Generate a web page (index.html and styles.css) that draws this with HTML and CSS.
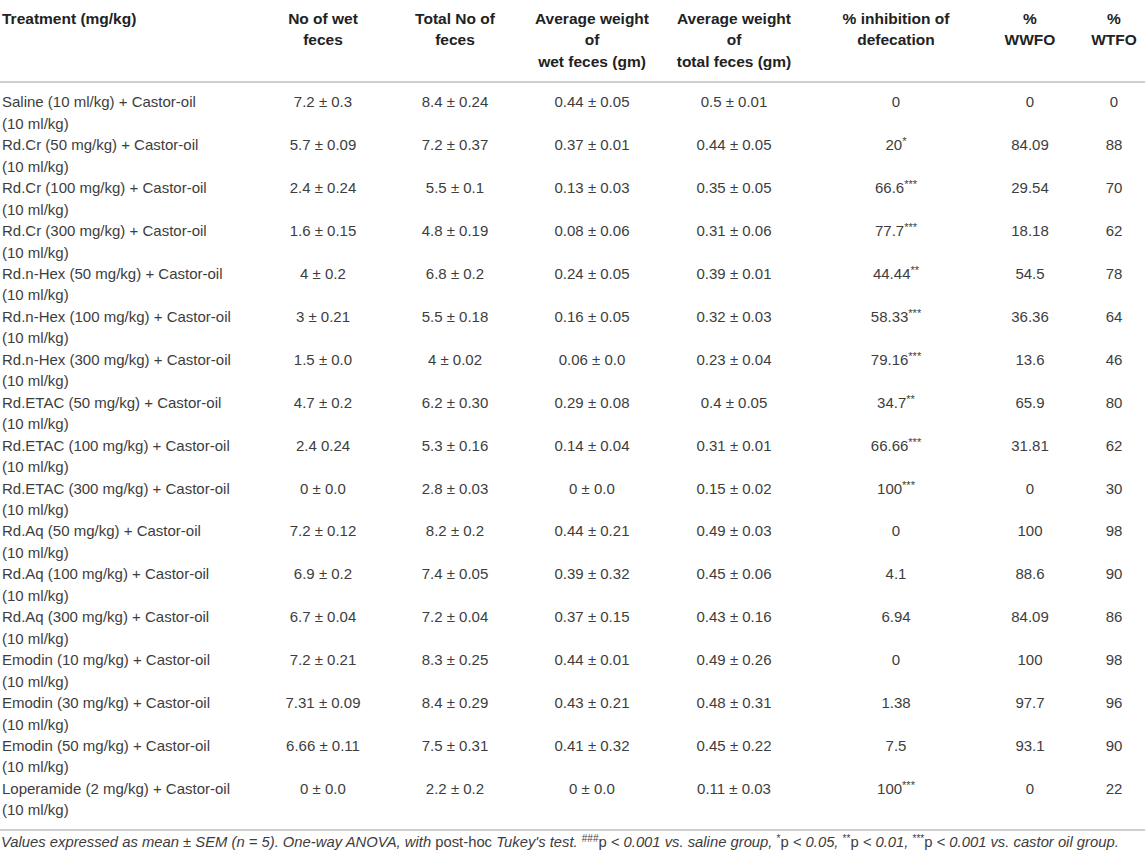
FILE: index.html
```html
<!DOCTYPE html>
<html>
<head>
<meta charset="utf-8">
<link rel="stylesheet" href="styles.css">
</head>
<body>
<table class="tbl">
<colgroup>
<col class="c1"><col class="c2"><col class="c3"><col class="c4"><col class="c5"><col class="c6"><col class="c7"><col class="c8">
</colgroup>
<thead>
<tr>
<th class="left">Treatment (mg/kg)</th>
<th>No of wet<br>feces</th>
<th>Total No of<br>feces</th>
<th>Average weight<br>of<br>wet feces (gm)</th>
<th>Average weight<br>of<br>total feces (gm)</th>
<th>% inhibition of<br>defecation</th>
<th>%<br>WWFO</th>
<th>%<br>WTFO</th>
</tr>
</thead>
<tbody>
<tr><td class="left">Saline (10 ml/kg) + Castor-oil<br>(10 ml/kg)</td><td>7.2 ± 0.3</td><td>8.4 ± 0.24</td><td>0.44 ± 0.05</td><td>0.5 ± 0.01</td><td>0</td><td>0</td><td>0</td></tr>
<tr><td class="left">Rd.Cr (50 mg/kg) + Castor-oil<br>(10 ml/kg)</td><td>5.7 ± 0.09</td><td>7.2 ± 0.37</td><td>0.37 ± 0.01</td><td>0.44 ± 0.05</td><td>20<sup>*</sup></td><td>84.09</td><td>88</td></tr>
<tr><td class="left">Rd.Cr (100 mg/kg) + Castor-oil<br>(10 ml/kg)</td><td>2.4 ± 0.24</td><td>5.5 ± 0.1</td><td>0.13 ± 0.03</td><td>0.35 ± 0.05</td><td>66.6<sup>***</sup></td><td>29.54</td><td>70</td></tr>
<tr><td class="left">Rd.Cr (300 mg/kg) + Castor-oil<br>(10 ml/kg)</td><td>1.6 ± 0.15</td><td>4.8 ± 0.19</td><td>0.08 ± 0.06</td><td>0.31 ± 0.06</td><td>77.7<sup>***</sup></td><td>18.18</td><td>62</td></tr>
<tr><td class="left">Rd.n-Hex (50 mg/kg) + Castor-oil<br>(10 ml/kg)</td><td>4 ± 0.2</td><td>6.8 ± 0.2</td><td>0.24 ± 0.05</td><td>0.39 ± 0.01</td><td>44.44<sup>**</sup></td><td>54.5</td><td>78</td></tr>
<tr><td class="left">Rd.n-Hex (100 mg/kg) + Castor-oil<br>(10 ml/kg)</td><td>3 ± 0.21</td><td>5.5 ± 0.18</td><td>0.16 ± 0.05</td><td>0.32 ± 0.03</td><td>58.33<sup>***</sup></td><td>36.36</td><td>64</td></tr>
<tr><td class="left">Rd.n-Hex (300 mg/kg) + Castor-oil<br>(10 ml/kg)</td><td>1.5 ± 0.0</td><td>4 ± 0.02</td><td>0.06 ± 0.0</td><td>0.23 ± 0.04</td><td>79.16<sup>***</sup></td><td>13.6</td><td>46</td></tr>
<tr><td class="left">Rd.ETAC (50 mg/kg) + Castor-oil<br>(10 ml/kg)</td><td>4.7 ± 0.2</td><td>6.2 ± 0.30</td><td>0.29 ± 0.08</td><td>0.4 ± 0.05</td><td>34.7<sup>**</sup></td><td>65.9</td><td>80</td></tr>
<tr><td class="left">Rd.ETAC (100 mg/kg) + Castor-oil<br>(10 ml/kg)</td><td>2.4 0.24</td><td>5.3 ± 0.16</td><td>0.14 ± 0.04</td><td>0.31 ± 0.01</td><td>66.66<sup>***</sup></td><td>31.81</td><td>62</td></tr>
<tr><td class="left">Rd.ETAC (300 mg/kg) + Castor-oil<br>(10 ml/kg)</td><td>0 ± 0.0</td><td>2.8 ± 0.03</td><td>0 ± 0.0</td><td>0.15 ± 0.02</td><td>100<sup>***</sup></td><td>0</td><td>30</td></tr>
<tr><td class="left">Rd.Aq (50 mg/kg) + Castor-oil<br>(10 ml/kg)</td><td>7.2 ± 0.12</td><td>8.2 ± 0.2</td><td>0.44 ± 0.21</td><td>0.49 ± 0.03</td><td>0</td><td>100</td><td>98</td></tr>
<tr><td class="left">Rd.Aq (100 mg/kg) + Castor-oil<br>(10 ml/kg)</td><td>6.9 ± 0.2</td><td>7.4 ± 0.05</td><td>0.39 ± 0.32</td><td>0.45 ± 0.06</td><td>4.1</td><td>88.6</td><td>90</td></tr>
<tr><td class="left">Rd.Aq (300 mg/kg) + Castor-oil<br>(10 ml/kg)</td><td>6.7 ± 0.04</td><td>7.2 ± 0.04</td><td>0.37 ± 0.15</td><td>0.43 ± 0.16</td><td>6.94</td><td>84.09</td><td>86</td></tr>
<tr><td class="left">Emodin (10 mg/kg) + Castor-oil<br>(10 ml/kg)</td><td>7.2 ± 0.21</td><td>8.3 ± 0.25</td><td>0.44 ± 0.01</td><td>0.49 ± 0.26</td><td>0</td><td>100</td><td>98</td></tr>
<tr><td class="left">Emodin (30 mg/kg) + Castor-oil<br>(10 ml/kg)</td><td>7.31 ± 0.09</td><td>8.4 ± 0.29</td><td>0.43 ± 0.21</td><td>0.48 ± 0.31</td><td>1.38</td><td>97.7</td><td>96</td></tr>
<tr><td class="left">Emodin (50 mg/kg) + Castor-oil<br>(10 ml/kg)</td><td>6.66 ± 0.11</td><td>7.5 ± 0.31</td><td>0.41 ± 0.32</td><td>0.45 ± 0.22</td><td>7.5</td><td>93.1</td><td>90</td></tr>
<tr><td class="left">Loperamide (2 mg/kg) + Castor-oil<br>(10 ml/kg)</td><td>0 ± 0.0</td><td>2.2 ± 0.2</td><td>0 ± 0.0</td><td>0.11 ± 0.03</td><td>100<sup>***</sup></td><td>0</td><td>22</td></tr>
</tbody>
</table>
<p class="note"><i>Values expressed as mean ± SEM (n = 5). One-way ANOVA, with</i> post-hoc <i>Tukey's test.</i> <sup>###</sup>p <i>&lt; 0.001 vs. saline group,</i> <sup>*</sup>p <i>&lt; 0.05,</i> <sup>**</sup>p <i>&lt; 0.01,</i> <sup>***</sup>p <i>&lt; 0.001 vs. castor oil group.</i></p>
</body>
</html>
```
FILE: styles.css
```css
html, body {
  margin: 0;
  padding: 0;
  background: #fff;
}
body {
  font-family: "Liberation Sans", Arial, sans-serif;
  font-size: 15px;
  color: #3d3d3d;
  width: 1145px;
}
.tbl {
  width: 1145px;
  table-layout: fixed;
  border-collapse: collapse;
  border-spacing: 0;
}
.c1 { width: 267px; }
.c2 { width: 112px; }
.c3 { width: 152px; }
.c4 { width: 122px; }
.c5 { width: 162px; }
.c6 { width: 162px; }
.c7 { width: 106px; }
.c8 { width: 62px; }
.tbl th, .tbl td {
  padding: 0;
  text-align: center;
  vertical-align: top;
  line-height: 21.45px;
  white-space: nowrap;
}
.tbl th {
  font-weight: bold;
  font-size: 15.5px;
  color: #222;
  padding-top: 8px;
  padding-bottom: 9px;
  height: 63px;
  border-bottom: 2px solid #cfcfcf;
}
.tbl .left {
  text-align: left;
  padding-left: 2px;
}
.tbl tbody tr:first-child td {
  padding-top: 8px;
}
.tbl tbody tr:last-child td {
  padding-bottom: 8px;
  border-bottom: 2px solid #cfcfcf;
}
.tbl sup {
  font-size: 11px;
  line-height: 0;
  vertical-align: 5px;
}
.note {
  margin: 0;
  padding: 2px 0 0 1px;
  font-size: 14.8px;
  line-height: 18px;
  color: #3d3d3d;
  white-space: nowrap;
}
.note sup {
  font-size: 10px;
  line-height: 0;
  vertical-align: 5px;
}
```
